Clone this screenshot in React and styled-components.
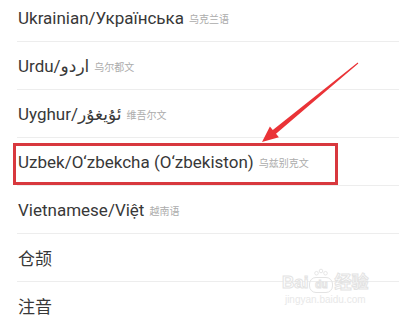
import styled, { createGlobalStyle } from "styled-components";

const GlobalStyle = createGlobalStyle`
  html, body {
    margin: 0;
    padding: 0;
    background: #ffffff;
  }
  body {
    font-family: Roboto, "DejaVu Sans", "Noto Sans CJK SC", sans-serif;
    overflow: hidden;
  }
`;

const languages = [
  { name: "Ukrainian/Українська", note: "乌克兰语" },
  { name: "Urdu/اردو", note: "乌尔都文" },
  { name: "Uyghur/ئۇيغۇر", note: "维吾尔文" },
  { name: "Uzbek/O‘zbekcha (O‘zbekiston)", note: "乌兹别克文", marked: true },
  { name: "Vietnamese/Việt", note: "越南语" },
  { name: "仓颉" },
  { name: "注音" },
];

const App = () => {
  return (
    <Screen>
      <GlobalStyle />
      <List>
        {languages.map((lang) => (
          <Row key={lang.name}>
            <Name>{lang.name}</Name>
            {lang.note && <Note>{lang.note}</Note>}
            {lang.marked && <Highlight />}
          </Row>
        ))}
      </List>

      <Arrow viewBox="0 0 399 323">
        <polygon
          points="358.3,63.4 276,133.7 278.9,137.2 262,142 269.9,126.4 272.8,129.9 357.7,62.6"
          fill="#ea3337"
        />
      </Arrow>

      <Watermark>
        <Brand>
          <span>Bai</span>
          <PawBadge>
            <Paw viewBox="0 0 24 12">
              <circle cx="6" cy="7" r="2.4" />
              <circle cx="12" cy="4" r="2.4" />
              <circle cx="18" cy="7" r="2.4" />
            </Paw>
            <Du>du</Du>
          </PawBadge>
          <span>经验</span>
        </Brand>
        <Site>jingyan.baidu.com</Site>
      </Watermark>
    </Screen>
  );
};

const Screen = styled.div`
  position: relative;
  width: 399px;
  height: 323px;
  overflow: hidden;
  background: #ffffff;
`;

const List = styled.ul`
  list-style: none;
  margin: -6px 0 0 0;
  padding: 0;
`;

const Row = styled.li`
  position: relative;
  display: flex;
  align-items: center;
  gap: 5px;
  height: 47px;
  margin-left: 17px;
  padding-left: 1px;
  border-bottom: 1px solid #ededed;
`;

const Name = styled.span`
  font-size: 17px;
  color: #383838;
  white-space: nowrap;
`;

const Note = styled.span`
  font-size: 10px;
  color: #acacac;
  margin-top: 2px;
  white-space: nowrap;
`;

const Highlight = styled.div`
  position: absolute;
  left: -4px;
  top: 5px;
  width: 319px;
  height: 36px;
  border: 3px solid #d8383e;
  pointer-events: none;
`;

const Arrow = styled.svg`
  position: absolute;
  left: 0;
  top: 0;
  width: 399px;
  height: 323px;
  pointer-events: none;
`;

const Watermark = styled.div`
  position: absolute;
  left: 282px;
  top: 268px;
  display: flex;
  flex-direction: column;
  align-items: center;
  pointer-events: none;
`;

const Brand = styled.div`
  display: flex;
  align-items: flex-end;
  gap: 1px;
  font-family: "Liberation Sans", "Noto Sans CJK SC", sans-serif;
  font-size: 17px;
  font-weight: 700;
  line-height: 20px;
  color: #ffffff;
  -webkit-text-stroke: 1px #e3e3e3;
`;

const PawBadge = styled.div`
  display: flex;
  flex-direction: column;
  align-items: center;
`;

const Paw = styled.svg`
  width: 18px;
  height: 9px;
  fill: none;
  stroke: #e3e3e3;
  stroke-width: 1.2;
`;

const Du = styled.span`
  display: flex;
  align-items: center;
  justify-content: center;
  width: 22px;
  height: 14px;
  border: 1px solid #e3e3e3;
  border-radius: 7px;
  font-size: 10px;
  line-height: 12px;
`;

const Site = styled.div`
  font-family: "Liberation Sans", sans-serif;
  font-size: 10px;
  line-height: 14px;
  color: #e8e8e8;
`;

export default App;
